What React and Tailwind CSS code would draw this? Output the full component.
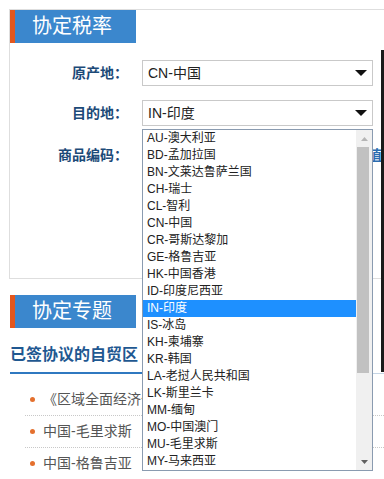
import React from 'react';

const countries = [
    'AU-澳大利亚', 'BD-孟加拉国', 'BN-文莱达鲁萨兰国', 'CH-瑞士', 'CL-智利',
    'CN-中国', 'CR-哥斯达黎加', 'GE-格鲁吉亚', 'HK-中国香港', 'ID-印度尼西亚',
    'IN-印度', 'IS-冰岛', 'KH-柬埔寨', 'KR-韩国', 'LA-老挝人民共和国',
    'LK-斯里兰卡', 'MM-缅甸', 'MO-中国澳门', 'MU-毛里求斯', 'MY-马来西亚'
];

const zones = ['《区域全面经济伙伴关系协定》', '中国-毛里求斯', '中国-格鲁吉亚'];

function Caret() {
    return (
        <svg width="12" height="6" viewBox="0 0 12 6"><path d="M0 0h12L6 6z" fill="#111" /></svg>
    );
}

function SectionHead({ title }) {
    return (
        <div className="flex h-[33px]">
            <div className="w-[5px] bg-[#e2571e]" />
            <div className="w-[121px] bg-[#3b87cd] pl-[17px] text-[20px] leading-[33px] text-white">{title}</div>
        </div>
    );
}

function Row({ label, children, className }) {
    return (
        <div className={`flex items-center h-[26px] ${className}`}>
            <div className="w-[118px] text-right text-[14px] font-bold text-[#1c4a78]">{label}</div>
            <div className="ml-[14px] flex items-center">{children}</div>
        </div>
    );
}

function FakeSelect({ value }) {
    return (
        <div className="w-[231px] h-[26px] border border-[#c9c9c9] flex items-center justify-between pl-[5px] pr-[5px] text-[14px] text-[#222]">
            <span>{value}</span>
            <Caret />
        </div>
    );
}

export default function App() {
    return (
        <div className="relative w-[384px] h-[479px] overflow-hidden bg-white font-['Liberation_Sans','Noto_Sans_CJK_SC',sans-serif]">
            <div className="ml-[9px] mt-[9px] h-[270px] border border-r-0 border-[#dedede]">
                <SectionHead title="协定税率" />
                <Row label="原产地：" className="mt-[17px]">
                    <FakeSelect value="CN-中国" />
                </Row>
                <Row label="目的地：" className="mt-[14px]">
                    <FakeSelect value="IN-印度" />
                </Row>
                <Row label="商品编码：" className="mt-[16px]">
                    <div className="w-[212px] h-[26px] border border-[#c9c9c9]" />
                    <span className="ml-[14px] text-[14px] font-bold text-[#2b6cb0]">值</span>
                </Row>
            </div>

            <div className="ml-[10px] mt-[16px]">
                <SectionHead title="协定专题" />
                <div className="mt-[15px] border-b border-[#c5d5e5]">
                    <div className="inline-block -mb-px border-b-2 border-[#2f78c0] pb-[6px] pr-[5px] text-[16px] leading-[22px] font-bold text-[#1f5891]">
                        已签协议的自贸区
                    </div>
                </div>
                <ul className="ml-[15px] mt-[10px]">
                    {zones.map((z) => (
                        <li key={z} className="h-[32px] border-b border-dotted border-[#c8c8c8] flex items-center pl-[5px] whitespace-nowrap">
                            <span className="w-[5px] h-[5px] rounded-full bg-[#e4702e]" />
                            <span className="ml-[8px] max-w-[99px] overflow-hidden text-[14px] text-[#555]">{z}</span>
                        </li>
                    ))}
                </ul>
            </div>

            {/* open dropdown of 目的地 */}
            <div className="absolute left-[142px] top-[129px] w-[231px] h-[342px] border border-[#8a9bb0] bg-white flex">
                <div className="w-[213px]">
                    {countries.map((c) => (
                        <div
                            key={c}
                            className={`h-[17px] leading-[17px] pl-[4px] text-[12px] whitespace-nowrap ${c === 'IN-印度' ? 'bg-[#1e90ff] text-white' : 'text-[#222]'}`}
                        >
                            {c}
                        </div>
                    ))}
                </div>
                <div className="w-[16px] bg-[#f0f0f0] flex flex-col">
                    <div className="h-[17px] flex items-center justify-center">
                        <svg width="7" height="4" viewBox="0 0 7 4"><path d="M0 4h7L3.5 0z" fill="#b5b5b5" /></svg>
                    </div>
                    <div className="ml-[1px] w-[12px] h-[226px] bg-[#c1c1c1]" />
                    <div className="flex-1" />
                    <div className="h-[17px] flex items-center justify-center">
                        <svg width="7" height="4" viewBox="0 0 7 4"><path d="M0 0h7L3.5 4z" fill="#606060" /></svg>
                    </div>
                </div>
            </div>

            <div className="absolute right-0 top-[50px] w-[3px] h-[322px] bg-[#1a1a1a]" />
        </div>
    );
}
